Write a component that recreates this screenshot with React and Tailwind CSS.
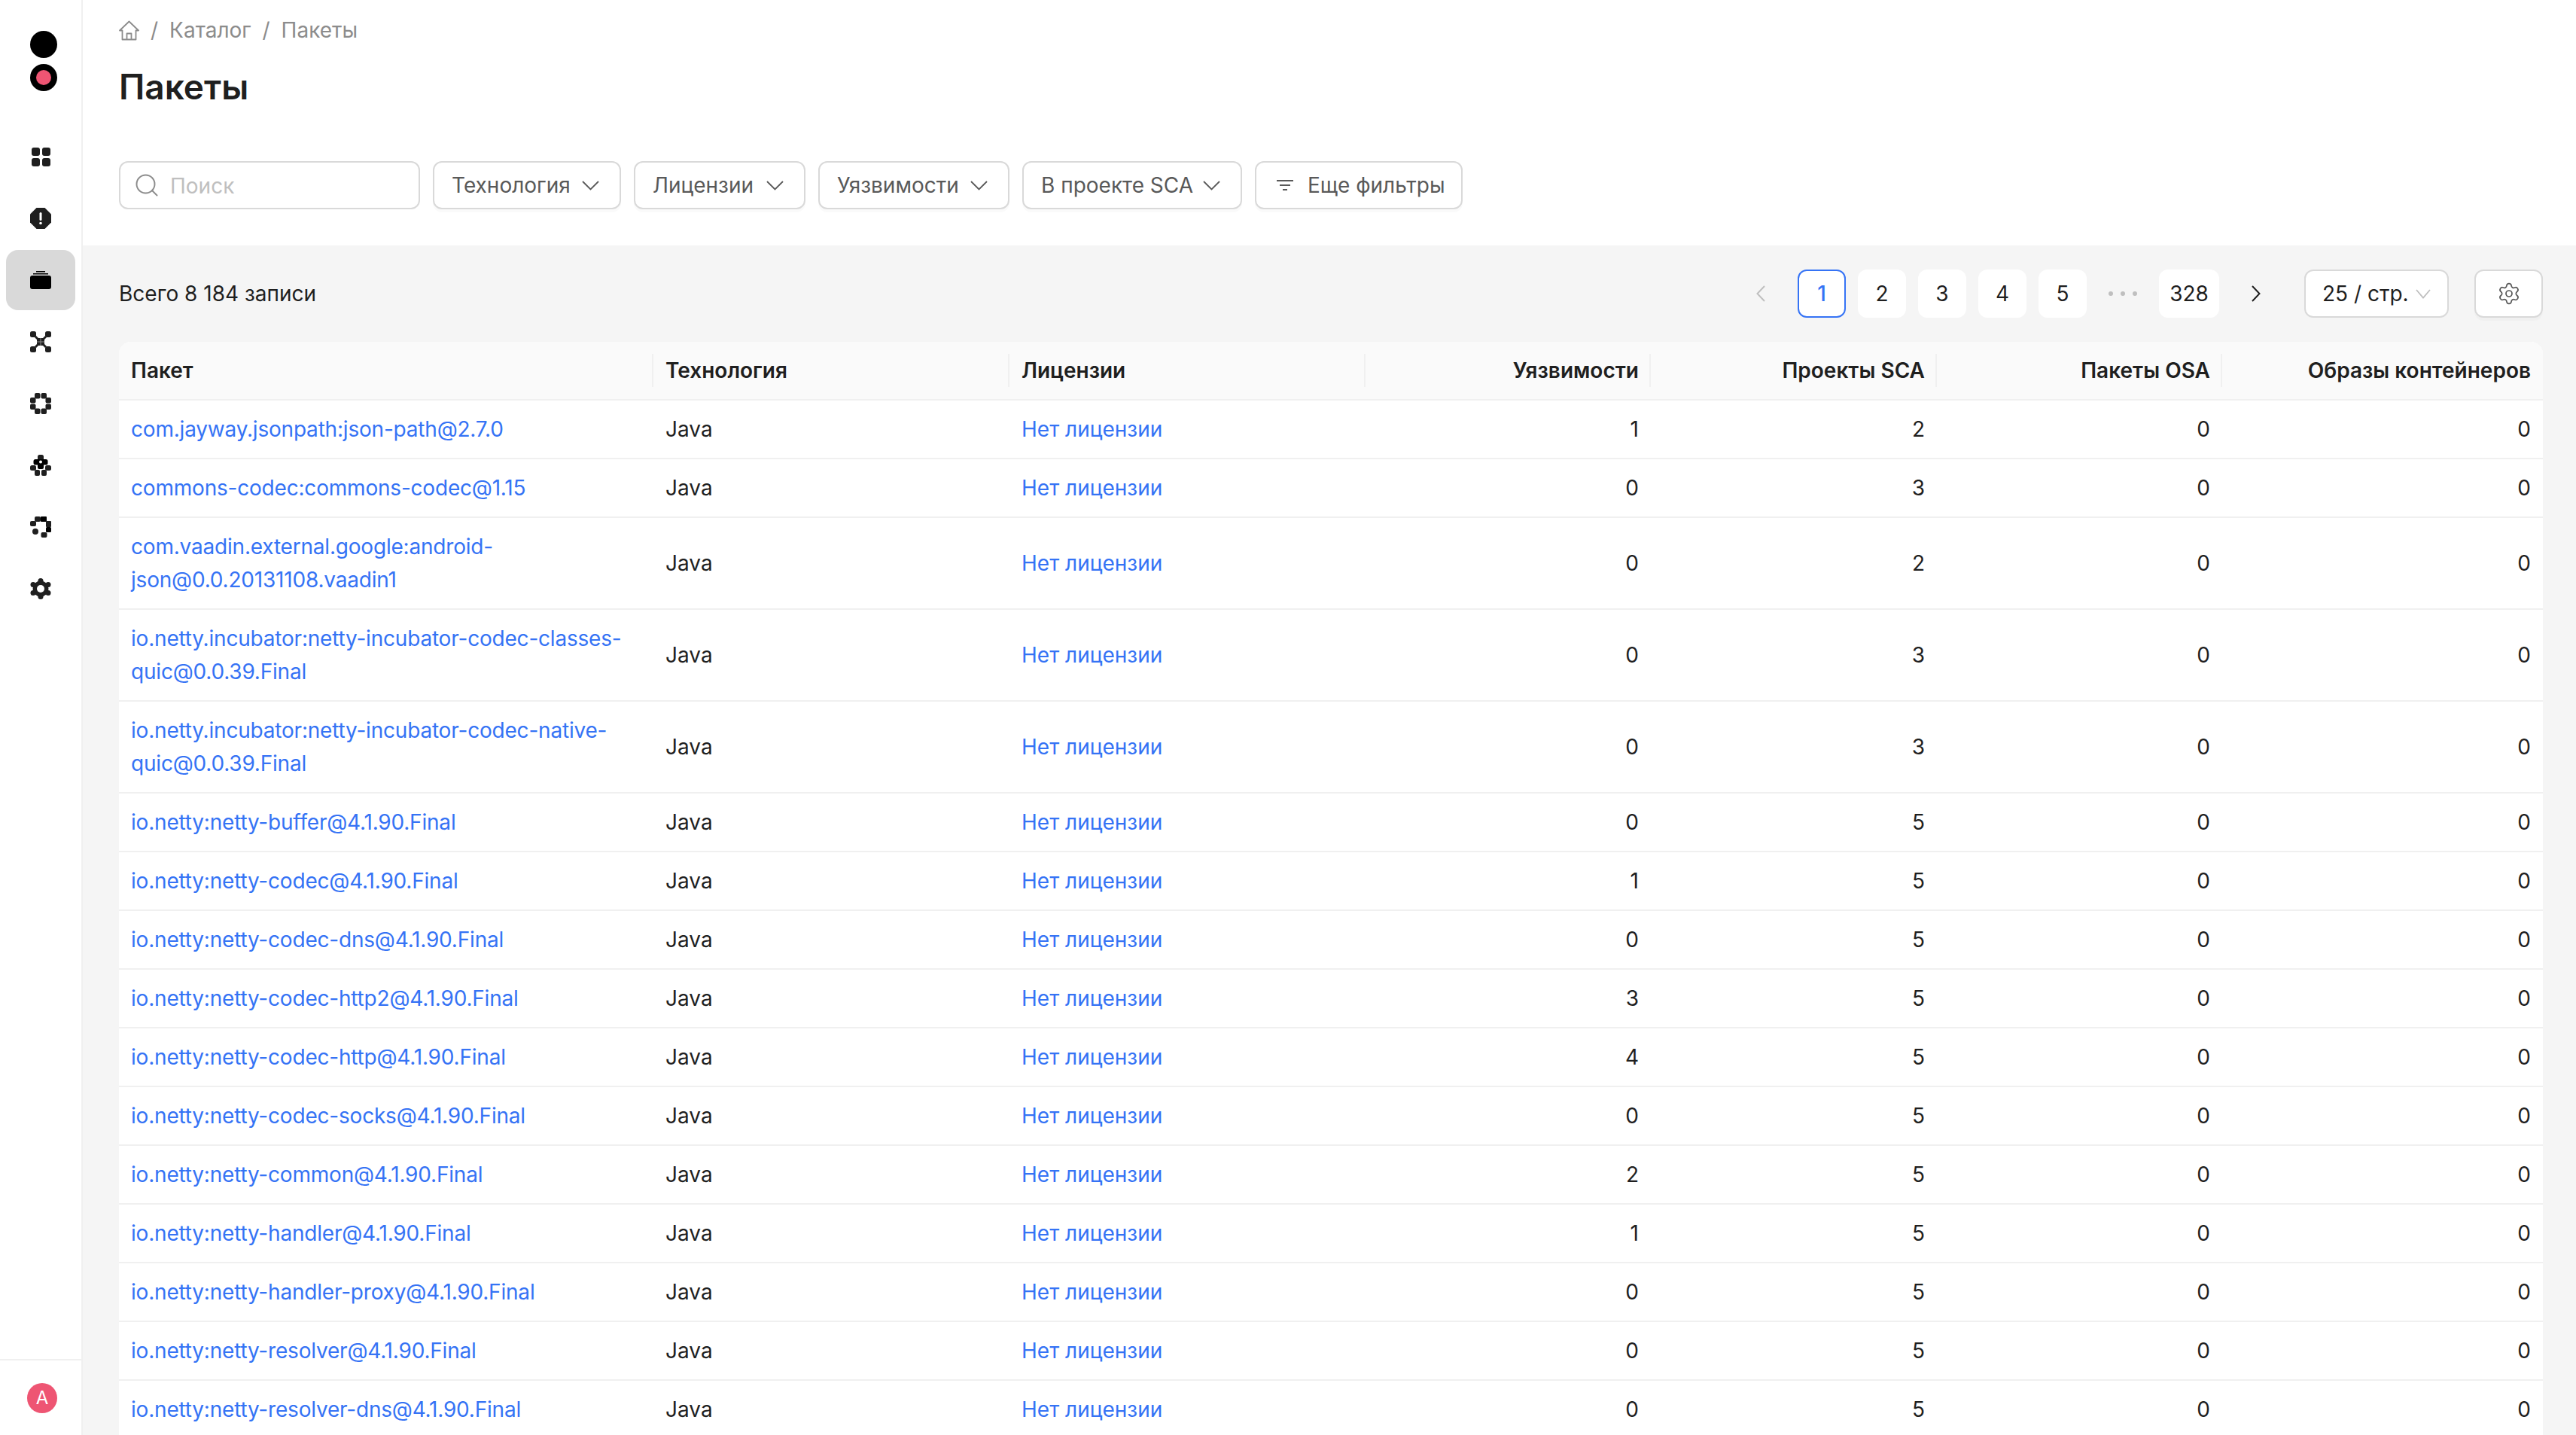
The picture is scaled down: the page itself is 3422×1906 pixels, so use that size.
import { Search, Settings } from "lucide-react";

const rows = [
  ["com.jayway.jsonpath:json-path@2.7.0", 1, 2],
  ["commons-codec:commons-codec@1.15", 0, 3],
  ["com.vaadin.external.google:android-json@0.0.20131108.vaadin1", 0, 2],
  ["io.netty.incubator:netty-incubator-codec-classes-quic@0.0.39.Final", 0, 3],
  ["io.netty.incubator:netty-incubator-codec-native-quic@0.0.39.Final", 0, 3],
  ["io.netty:netty-buffer@4.1.90.Final", 0, 5],
  ["io.netty:netty-codec@4.1.90.Final", 1, 5],
  ["io.netty:netty-codec-dns@4.1.90.Final", 0, 5],
  ["io.netty:netty-codec-http2@4.1.90.Final", 3, 5],
  ["io.netty:netty-codec-http@4.1.90.Final", 4, 5],
  ["io.netty:netty-codec-socks@4.1.90.Final", 0, 5],
  ["io.netty:netty-common@4.1.90.Final", 2, 5],
  ["io.netty:netty-handler@4.1.90.Final", 1, 5],
  ["io.netty:netty-handler-proxy@4.1.90.Final", 0, 5],
  ["io.netty:netty-resolver@4.1.90.Final", 0, 5],
  ["io.netty:netty-resolver-dns@4.1.90.Final", 0, 5],
];

const cols = "grid grid-cols-[710px_473px_473px_379px_380px_379px_426px]";

function Icon({ children }) {
  return (
    <svg width="28" height="28" viewBox="0 0 28 28" fill="#1f1f1f">
      {children}
    </svg>
  );
}

const navIcons = [
  <Icon key="dash">
    <rect x="2" y="2" width="11" height="11" rx="3" />
    <rect x="16" y="2" width="11" height="11" rx="3" />
    <rect x="2" y="16" width="11" height="11" rx="3" />
    <rect x="16" y="16" width="11" height="11" rx="3" />
  </Icon>,
  <Icon key="alert">
    <path d="M8.5 0h11L28 8.5v11L19.500 28h-11L0 19.500v-11z" />
    <rect x="12.500" y="6" width="3" height="11" rx="1.500" fill="#fff" />
    <circle cx="14" cy="20.500" r="1.800" fill="#fff" />
  </Icon>,
  <Icon key="pkg">
    <rect x="0" y="8" width="28" height="18" rx="3" fill="#000" />
    <rect x="4" y="5" width="20" height="1.500" fill="#000" />
    <rect x="8" y="2" width="12" height="1.500" fill="#000" />
  </Icon>,
  <Icon key="net">
    <rect x="0" y="0" width="8" height="8" rx="2.500" />
    <rect x="20" y="0" width="8" height="8" rx="2.500" />
    <rect x="0" y="20" width="8" height="8" rx="2.500" />
    <rect x="20" y="20" width="8" height="8" rx="2.500" />
    <path d="M6 8l2-2 3 3h6l3-3 2 2-3 3v6l3 3-2 2-3-3h-6l-3 3-2-2 3-3v-6z" />
    <rect x="13.500" y="9" width="1" height="10" fill="#8c8c8c" />
    <rect x="9" y="13.500" width="10" height="1" fill="#8c8c8c" />
  </Icon>,
  <Icon key="ring">
    <rect x="6" y="0" width="7.500" height="7.500" rx="2" />
    <rect x="14.500" y="0" width="7.500" height="7.500" rx="2" />
    <rect x="6" y="20.500" width="7.500" height="7.500" rx="2" />
    <rect x="14.500" y="20.500" width="7.500" height="7.500" rx="2" />
    <rect x="0" y="6" width="7.500" height="7.500" rx="2" />
    <rect x="0" y="14.500" width="7.500" height="7.500" rx="2" />
    <rect x="20.500" y="6" width="7.500" height="7.500" rx="2" />
    <rect x="20.500" y="14.500" width="7.500" height="7.500" rx="2" />
  </Icon>,
  <Icon key="puzzle">
    <rect x="10" y="0" width="8" height="8" rx="2.500" />
    <rect x="4.500" y="6" width="19" height="7.500" rx="2.500" fill="#000" />
    <rect x="10" y="10" width="8" height="9" rx="2" fill="#000" />
    <circle cx="14" cy="9.500" r="2" fill="#fff" />
    <rect x="0" y="14" width="8" height="7" rx="2.500" />
    <rect x="20" y="14" width="8" height="7" rx="2.500" />
    <rect x="6" y="20" width="7" height="8" rx="2" />
    <rect x="15" y="20" width="7" height="8" rx="2" />
  </Icon>,
  <Icon key="arc">
    <rect x="6" y="0" width="8" height="7" rx="2" />
    <rect x="14" y="0" width="8" height="7" rx="1" fill="#000" />
    <rect x="0" y="6" width="8" height="7" rx="2" />
    <rect x="21" y="6" width="7" height="8" rx="1" />
    <rect x="21" y="14" width="7" height="7" rx="1.500" fill="#000" />
    <rect x="14.500" y="21" width="8" height="7" rx="2" />
    <circle cx="7" cy="20" r="4" />
  </Icon>,
  <Icon key="gear">
    <circle cx="14" cy="14" r="10.500" />
    <circle cx="14" cy="3.500" r="3.500" />
    <circle cx="14" cy="24.500" r="3.500" />
    <circle cx="4" cy="8.500" r="3.500" />
    <circle cx="24" cy="8.500" r="3.500" />
    <circle cx="4" cy="19.500" r="3.500" />
    <circle cx="24" cy="19.500" r="3.500" />
    <circle cx="14" cy="14" r="5" fill="#fff" />
  </Icon>,
];

function HomeIcon() {
  return (
    <svg width="27" height="27" viewBox="0 0 27 27" fill="none" stroke="#8c8c8c" strokeWidth="1.800" strokeLinejoin="round">
      <path d="M1 13.500 13.500 1.500 26 13.500h-3.500v12h-18v-12z" />
      <path d="M10.500 25.500v-8h6v8" />
    </svg>
  );
}

function FilterIcon() {
  return (
    <svg width="22" height="14" viewBox="0 0 22 14" stroke="#595959" strokeWidth="2" className="shrink-0">
      <path d="M0 1h22M4 7h14M8 13h6" />
    </svg>
  );
}

function Vee({ w = 23, h = 13, color = "#595959" }) {
  return (
    <svg width={w} height={h} viewBox={`0 0 ${w} ${h}`} fill="none" stroke={color} strokeWidth="1.800" className="shrink-0">
      <path d={`M1 1 ${w / 2} ${h - 1.500} ${w - 1} 1`} />
    </svg>
  );
}

function Caret({ dir, color }) {
  return (
    <svg width="12" height="22" viewBox="0 0 12 22" fill="none" stroke={color} strokeWidth="2" className="shrink-0">
      <path d={dir === "left" ? "M11 1 1.500 11 11 21" : "M1 1 10.500 11 1 21"} />
    </svg>
  );
}

function Dropdown({ label, w }) {
  return (
    <button className={`${w} h-[64px] flex items-center justify-between pl-[23px] pr-[27px] bg-white border-2 border-[#d9d9d9] rounded-[12px] shadow-[0_4px_0_rgba(0,0,0,0.02)] text-[28px] text-[#595959] whitespace-nowrap`}>
      <span>{label}</span>
      <Vee />
    </button>
  );
}

function PageBtn({ children, active, w = "w-[64px]" }) {
  return (
    <div
      className={`${w} h-[64px] flex items-center justify-center rounded-[12px] bg-white text-[28px] ${
        active ? "border-2 border-[#3573f5] text-[#3573f5] font-medium" : "text-[#1f1f1f]"
      }`}
    >
      {children}
    </div>
  );
}

function Head({ children, right }) {
  return (
    <div className={`relative flex items-center px-4 font-semibold ${right ? "justify-end" : ""}`}>
      {children}
    </div>
  );
}

function Divider() {
  return <span className="absolute right-0 top-[16px] h-[44px] w-[2px] bg-[#f0f0f0]" />;
}

export default function App() {
  return (
    <div className="flex h-screen overflow-hidden bg-white text-[#1f1f1f] font-['Inter',sans-serif] text-[28px] leading-[44px]">
      <aside className="w-[110px] shrink-0 flex flex-col border-r-2 border-[#f0f0f0] bg-white">
        <div className="h-[168px] pt-[41px] pl-[40px] flex flex-col gap-[8px]">
          <div className="w-[36px] h-[36px] rounded-full bg-black" />
          <div className="w-[36px] h-[36px] rounded-full bg-black flex items-center justify-center">
            <div className="w-[20px] h-[20px] rounded-full bg-[#ee5573]" />
          </div>
        </div>
        <nav className="flex flex-col gap-[2px] pl-[8px]">
          {navIcons.map((icon, i) => (
            <div
              key={i}
              className={`w-[92px] h-[80px] flex items-center justify-center rounded-[16px] ${i === 2 ? "bg-[#d9d9d9]" : ""}`}
            >
              {icon}
            </div>
          ))}
        </nav>
        <div className="mt-auto h-[101px] border-t-2 border-[#f0f0f0] flex items-center justify-center pl-[4px]">
          <div className="w-[40px] h-[40px] rounded-full bg-[#ee5573] text-white text-[24px] flex items-center justify-center">
            A
          </div>
        </div>
      </aside>

      <main className="flex-1 min-w-0 bg-[#f5f5f5]">
        <header className="h-[326px] bg-white pl-[48px]">
          <div className="flex items-center h-[80px] text-[#8c8c8c]">
            <HomeIcon />
            <span className="ml-[15px]">/</span>
            <span className="ml-[15px]">Каталог</span>
            <span className="ml-[15px]">/</span>
            <span className="ml-[15px]">Пакеты</span>
          </div>
          <h1 className="text-[46px] leading-[56px] font-semibold mt-[7px]">Пакеты</h1>
          <div className="flex gap-[17px] mt-[71px]">
            <div className="w-[400px] h-[64px] flex items-center gap-[13px] pl-[17px] bg-white border-2 border-[#d9d9d9] rounded-[12px] text-[#bfbfbf]">
              <Search size={36} strokeWidth={1.300} color="#8c8c8c" />
              <span className="pt-[2px]">Поиск</span>
            </div>
            <Dropdown label="Технология" w="w-[250px]" />
            <Dropdown label="Лицензии" w="w-[228px]" />
            <Dropdown label="Уязвимости" w="w-[254px]" />
            <Dropdown label="В проекте SCA" w="w-[292px]" />
            <button className="w-[276px] h-[64px] flex items-center gap-[19px] pl-[27px] bg-white border-2 border-[#d9d9d9] rounded-[12px] shadow-[0_4px_0_rgba(0,0,0,0.02)] text-[#595959] whitespace-nowrap">
              <FilterIcon />
              <span>Еще фильтры</span>
            </button>
          </div>
        </header>

        <section className="pl-[48px] pr-[44px]">
          <div className="h-[128px] flex items-center">
            <span>Всего 8 184 записи</span>
            <div className="ml-auto flex items-center">
              <Caret dir="left" color="#bfbfbf" />
              <div className="ml-[43px] flex items-center gap-[16px]">
                <PageBtn active>1</PageBtn>
                <PageBtn>2</PageBtn>
                <PageBtn>3</PageBtn>
                <PageBtn>4</PageBtn>
                <PageBtn>5</PageBtn>
                <div className="w-[64px] flex items-center justify-center gap-[10px]">
                  <span className="w-[6px] h-[6px] rounded-full bg-[#bfbfbf]" />
                  <span className="w-[6px] h-[6px] rounded-full bg-[#bfbfbf]" />
                  <span className="w-[6px] h-[6px] rounded-full bg-[#bfbfbf]" />
                </div>
                <PageBtn w="w-[80px]">328</PageBtn>
              </div>
              <div className="ml-[43px]">
                <Caret dir="right" color="#1f1f1f" />
              </div>
              <div className="ml-[58px] w-[192px] h-[64px] flex items-center justify-between pl-[22px] pr-[22px] bg-white border-2 border-[#d9d9d9] rounded-[12px]">
                <span>25 / стр.</span>
                <Vee w={20} h={13} color="#bfbfbf" />
              </div>
              <div className="ml-[34px] w-[91px] h-[64px] flex items-center justify-center bg-white border-2 border-[#d9d9d9] rounded-[12px] shadow-[0_4px_0_rgba(0,0,0,0.02)]">
                <Settings size={32} strokeWidth={1.300} color="#595959" />
              </div>
            </div>
          </div>

          <div className="bg-white rounded-t-[16px] overflow-hidden">
            <div className={`${cols} h-[78px] bg-[#fafafa] border-b-2 border-[#f0f0f0]`}>
              <Head>Пакет<Divider /></Head>
              <Head>Технология<Divider /></Head>
              <Head>Лицензии<Divider /></Head>
              <Head right>Уязвимости<Divider /></Head>
              <Head right>Проекты SCA<Divider /></Head>
              <Head right>Пакеты OSA<Divider /></Head>
              <Head right>Образы контейнеров</Head>
            </div>
            {rows.map(([name, vulns, sca]) => (
              <div key={name} className={`${cols} border-b-2 border-[#f0f0f0] min-h-[78px]`}>
                <div className="flex items-center px-4 py-[16px] text-[#3573f5] tracking-[-0.2px]">
                  <span>{name}</span>
                </div>
                <div className="flex items-center px-4">Java</div>
                <div className="flex items-center px-4 text-[#3573f5]">Нет лицензии</div>
                <div className="flex items-center justify-end px-4">{vulns}</div>
                <div className="flex items-center justify-end px-4">{sca}</div>
                <div className="flex items-center justify-end px-4">0</div>
                <div className="flex items-center justify-end px-4">0</div>
              </div>
            ))}
          </div>
        </section>
      </main>
    </div>
  );
}
